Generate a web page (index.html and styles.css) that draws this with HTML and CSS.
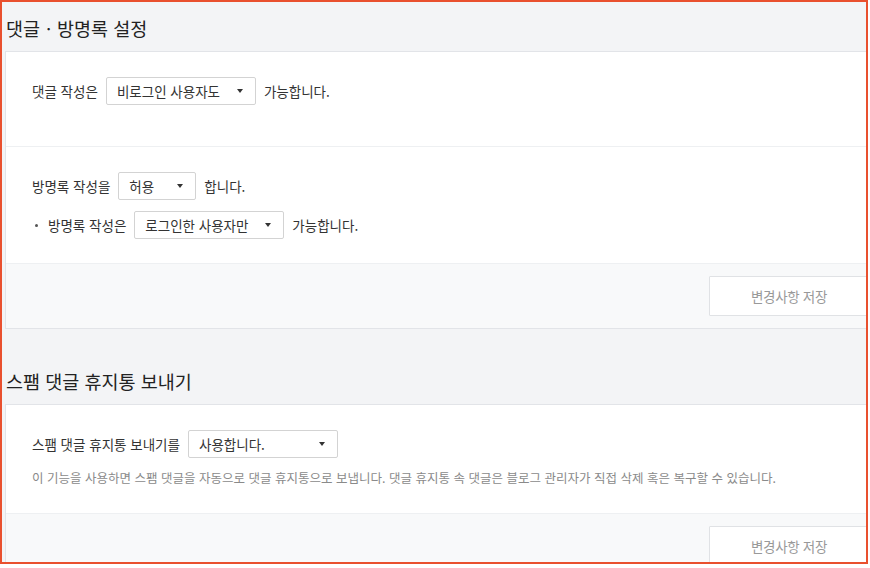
FILE: index.html
```html
<!DOCTYPE html>
<html lang="ko">
<head>
<meta charset="utf-8">
<title>댓글·방명록 설정</title>
<link rel="stylesheet" href="styles.css">
</head>
<body>
<div class="frame">
  <section class="section">
    <h2 class="section-title">댓글ㆍ방명록 설정</h2>
    <div class="card">
      <div class="row row-first">
        <div class="line">
          <span class="label">댓글 작성은</span>
          <span class="select w150"><span class="select-text">비로그인 사용자도</span><span class="caret"></span></span>
          <span class="label">가능합니다.</span>
        </div>
      </div>
      <div class="row">
        <div class="line">
          <span class="label">방명록 작성을</span>
          <span class="select w78"><span class="select-text">허용</span><span class="caret"></span></span>
          <span class="label">합니다.</span>
        </div>
        <div class="line line-sub">
          <span class="bullet"></span>
          <span class="label">방명록 작성은</span>
          <span class="select w150"><span class="select-text">로그인한 사용자만</span><span class="caret"></span></span>
          <span class="label">가능합니다.</span>
        </div>
      </div>
      <div class="footer">
        <button class="save" type="button">변경사항 저장</button>
      </div>
    </div>
  </section>
  <section class="section section-next">
    <h2 class="section-title">스팸 댓글 휴지통 보내기</h2>
    <div class="card">
      <div class="row row-spam">
        <div class="line">
          <span class="label">스팸 댓글 휴지통 보내기를</span>
          <span class="select w150"><span class="select-text">사용합니다.</span><span class="caret"></span></span>
        </div>
        <p class="desc">이 기능을 사용하면 스팸 댓글을 자동으로 댓글 휴지통으로 보냅니다. 댓글 휴지통 속 댓글은 블로그 관리자가 직접 삭제 혹은 복구할 수 있습니다.</p>
      </div>
      <div class="footer">
        <button class="save" type="button">변경사항 저장</button>
      </div>
    </div>
  </section>
</div>
</body>
</html>
```

FILE: styles.css
```css
html, body {
  margin: 0;
  padding: 0;
  background: #ffffff;
}

body {
  font-family: "Noto Sans CJK KR", "Noto Sans", sans-serif;
  color: #333333;
}

.frame {
  box-sizing: border-box;
  width: 868px;
  height: 564px;
  border: 2px solid #e9502e;
  background: #f3f4f6;
  overflow: hidden;
  padding-left: 3px;
}

.section-title {
  margin: 0;
  padding: 14px 0 11px 1px;
  font-size: 18.5px;
  line-height: 24px;
  font-weight: 400;
  color: #222222;
  letter-spacing: 0;
}

.section-next {
  margin-top: 26px;
}

.card {
  box-sizing: border-box;
  width: 890px;
  background: #ffffff;
  border: 1px solid #e2e4e8;
}

.row {
  padding: 25px 26px 24px;
  border-bottom: 1px solid #eef0f2;
  display: flex;
  flex-direction: column;
  gap: 11px;
}

.row-first {
  padding-bottom: 41px;
}

.row-spam {
  gap: 0;
  padding-bottom: 26px;
}

.line {
  display: flex;
  align-items: center;
  gap: 8px;
  height: 28px;
}

.line-sub {
  padding-left: 3px;
}

.bullet {
  width: 3px;
  height: 3px;
  border-radius: 50%;
  background: #555555;
  margin-right: 2px;
}

.label {
  font-size: 13.5px;
  color: #333333;
}

.select {
  box-sizing: border-box;
  height: 28px;
  border: 1px solid #d3d3d3;
  border-radius: 2px;
  background: #ffffff;
  display: flex;
  align-items: center;
  justify-content: space-between;
  padding: 0 12px 0 10px;
}

.w150 { width: 150px; }
.w78 { width: 78px; }

.select-text {
  font-size: 13.5px;
  color: #333333;
}

.caret {
  width: 0;
  height: 0;
  border-left: 3.5px solid transparent;
  border-right: 3.5px solid transparent;
  border-top: 4px solid #333333;
}

.desc {
  margin: 11px 0 0;
  font-size: 12.5px;
  line-height: 18px;
  color: #8a8a8a;
}

.footer {
  background: #f8f9fa;
  padding: 12px 25px 12px 0;
  display: flex;
  justify-content: flex-end;
}

.save {
  box-sizing: border-box;
  width: 160px;
  height: 40px;
  background: #ffffff;
  border: 1px solid #e0e2e5;
  border-radius: 1px;
  font-family: "Noto Sans CJK KR", "Noto Sans", sans-serif;
  font-size: 13.5px;
  color: #999999;
  letter-spacing: -0.3px;
  cursor: pointer;
}
```
